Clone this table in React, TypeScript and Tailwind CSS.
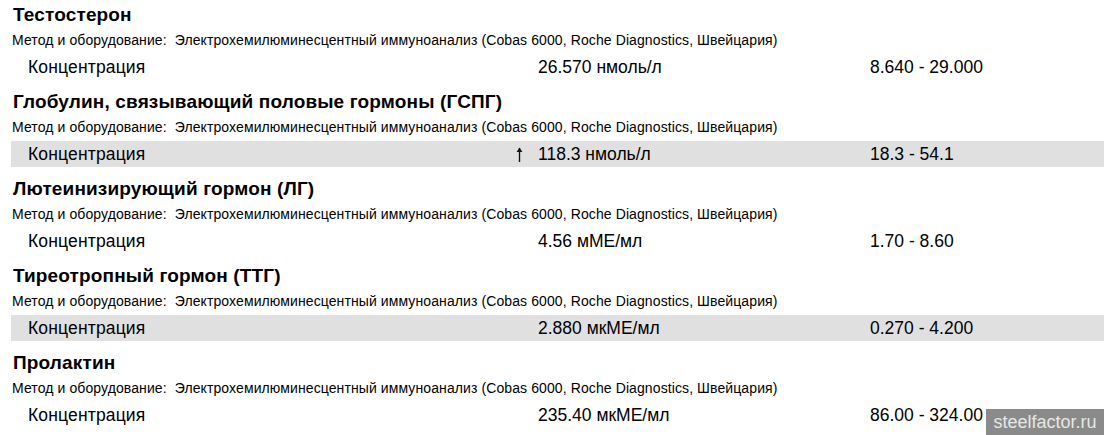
const method =
  'Электрохемилюминесцентный иммуноанализ (Cobas 6000, Roche Diagnostics, Швейцария)'

interface Test {
  title: string
  value: string
  range: string
  high?: boolean
  shaded?: boolean
}

const tests: Test[] = [
  { title: 'Тестостерон', value: '26.570 нмоль/л', range: '8.640 - 29.000' },
  {
    title: 'Глобулин, связывающий половые гормоны (ГСПГ)',
    value: '118.3 нмоль/л',
    range: '18.3 - 54.1',
    high: true,
    shaded: true,
  },
  { title: 'Лютеинизирующий гормон (ЛГ)', value: '4.56 мМЕ/мл', range: '1.70 - 8.60' },
  { title: 'Тиреотропный гормон (ТТГ)', value: '2.880 мкМЕ/мл', range: '0.270 - 4.200', shaded: true },
  { title: 'Пролактин', value: '235.40 мкМЕ/мл', range: '86.00 - 324.00' },
]

function UpArrow() {
  return (
    <svg width="7" height="15" viewBox="0 0 7 15" className="ml-[-2px] mt-[1px]">
      <path d="M3.5 1 V15" stroke="#111" strokeWidth="1.4" />
      <path d="M0.6 5 L3.5 0.5 L6.4 5 Z" fill="#111" />
    </svg>
  )
}

function TestBlock({ t }: { t: Test }) {
  return (
    <div className="h-[87px]">
      <div className="pt-[4px] h-[31px] pl-[13px] text-[19px] tracking-[0.15px] leading-[22px] font-bold text-black">
        {t.title}
      </div>
      <div className="h-[23px] pl-[12px] text-[14px] tracking-[0.1px] leading-[18px] text-black whitespace-pre">
        {'Метод и оборудование:  ' + method}
      </div>
      <div
        className={
          'ml-[11px] h-[26px] pl-[17px] flex items-center text-[17.5px] leading-[26px] text-black ' +
          (t.shaded ? 'bg-[#e0e0e0]' : '')
        }
      >
        <div className="w-[490px] flex-none tracking-[0.15px]">Концентрация</div>
        <div className="w-[20px] flex-none flex items-center">{t.high ? <UpArrow /> : null}</div>
        <div className="w-[332px] flex-none">{t.value}</div>
        <div>{t.range}</div>
      </div>
    </div>
  )
}

export default function App() {
  return (
    <div
      className="relative w-[1104px] h-[435px] overflow-hidden bg-white"
      style={{ fontFamily: '"Liberation Sans", Arial, sans-serif' }}
    >
      {tests.map((t) => (
        <TestBlock key={t.title} t={t} />
      ))}
      <div className="absolute right-0 bottom-0 w-[118px] h-[26px] bg-[#8a8a8a] text-[#e6e6e6] text-[18px] leading-[26px] text-center">
        steelfactor.ru
      </div>
    </div>
  )
}
